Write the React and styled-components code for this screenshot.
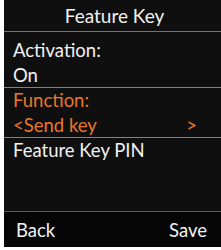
import styled, { createGlobalStyle } from "styled-components";

const GlobalStyle = createGlobalStyle`
  html, body {
    margin: 0;
    padding: 0;
    background: #ffffff;
  }
`;

export default function App() {
  return (
    <>
      <GlobalStyle />
      <Screen>
        <Header>Feature Key</Header>
        <Content>
          <Group>
            <Row>Activation:</Row>
            <Row>On</Row>
          </Group>
          <SelectedGroup>
            <Row $active>Function:</Row>
            <Row $active>
              <span>&lt;Send key</span>
              <span>&gt;</span>
            </Row>
          </SelectedGroup>
          <Row>Feature Key PIN</Row>
        </Content>
        <SoftKeys>
          <span>Back</span>
          <span>Save</span>
        </SoftKeys>
      </Screen>
    </>
  );
}

const Screen = styled.div`
  margin-left: 4px;
  width: 217px;
  height: 247px;
  background: #0f0f0f;
  display: flex;
  flex-direction: column;
  font-family: Lato, "Open Sans", sans-serif;
  font-size: 18.5px;
  color: #f2f2f2;
`;

const Header = styled.div`
  height: 31px;
  line-height: 31px;
  font-size: 19px;
  text-align: center;
  padding-left: 4px;
  border-bottom: 1px solid #4f7b9c;
  flex-shrink: 0;
`;

const Content = styled.div`
  flex: 1;
  padding-top: 6px;
`;

const Group = styled.div`
  display: flex;
  flex-direction: column;
`;

const SelectedGroup = styled.div`
  display: flex;
  flex-direction: column;
  border-top: 1px solid #d8691d;
  border-bottom: 1px solid #d8691d;
  height: 49px;
`;

const Row = styled.div`
  height: 24.5px;
  line-height: 25px;
  padding: 0 24px 0 9px;
  display: flex;
  justify-content: space-between;
  color: ${(p) => (p.$active ? "#e8782a" : "#f2f2f2")};
  white-space: nowrap;
`;

const SoftKeys = styled.div`
  height: 35px;
  flex-shrink: 0;
  border-top: 1px solid #3f6480;
  background: #050505;
  display: flex;
  justify-content: space-between;
  align-items: center;
  padding: 0 14px 0 12px;
`;
